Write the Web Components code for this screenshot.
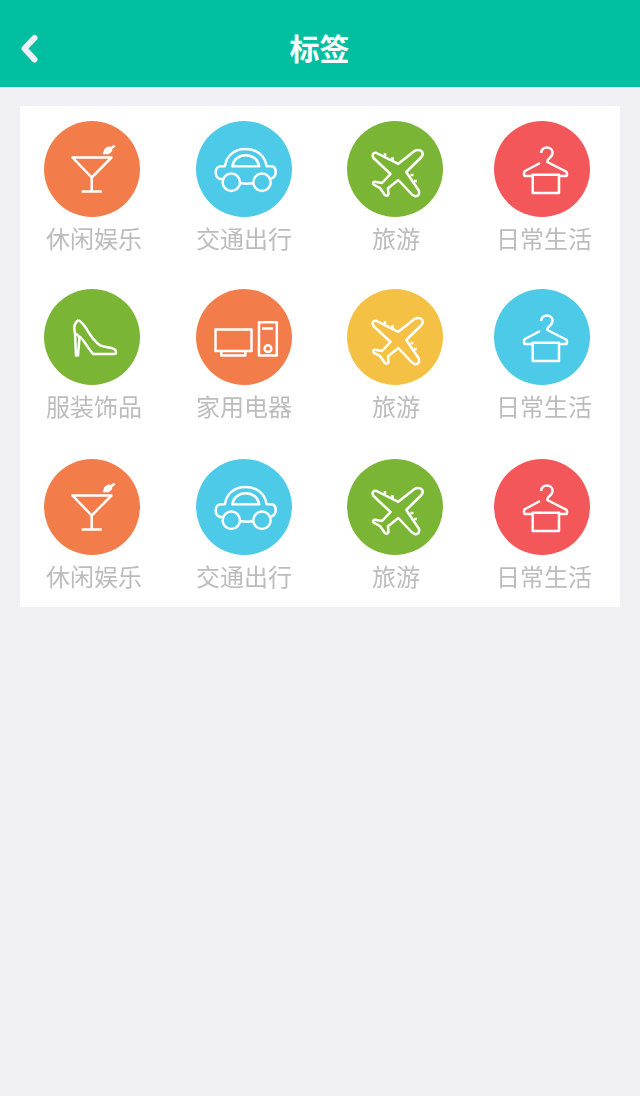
<!DOCTYPE html>
<html lang="zh">
<head>
<meta charset="utf-8">
<title>标签</title>
<style>
    html, body {
        margin: 0;
        height: 100%;
        background: #efeff4;
    }

    tag-item:nth-child(4n+1), tag-item:nth-child(4n) {
        --label-inset: 3px;
    }

    tag-item:nth-child(4n+3) {
        --label-inset: 1px;
    }
</style>
</head>
<body>
<tag-page>
    <app-header slot="header" title="标签"></app-header>
    <tag-grid>
        <tag-item color="#f37d4a" icon="cocktail">休闲娱乐</tag-item>
        <tag-item color="#4dcae8" icon="car">交通出行</tag-item>
        <tag-item color="#7ab536" icon="plane">旅游</tag-item>
        <tag-item color="#f3575a" icon="hanger">日常生活</tag-item>
        <tag-item color="#7ab536" icon="shoe">服装饰品</tag-item>
        <tag-item color="#f37d4a" icon="computer">家用电器</tag-item>
        <tag-item color="#f5c145" icon="plane">旅游</tag-item>
        <tag-item color="#4dcae8" icon="hanger">日常生活</tag-item>
        <tag-item color="#f37d4a" icon="cocktail">休闲娱乐</tag-item>
        <tag-item color="#4dcae8" icon="car">交通出行</tag-item>
        <tag-item color="#7ab536" icon="plane">旅游</tag-item>
        <tag-item color="#f3575a" icon="hanger">日常生活</tag-item>
    </tag-grid>
</tag-page>
<script>
const FONT = '"Noto Sans CJK SC", "Noto Sans", sans-serif';

const ICONS = {
    cocktail: `
        <path d="M28.5 36.5H67.5L47.7 56.5ZM47.7 56.5V70.5M37.7 70.5H57.7"/>
        <path d="M59.3 32.7L70.7 24.7" stroke-width="1.8"/>
        <ellipse cx="64" cy="29.5" rx="4.4" ry="3.4" transform="rotate(-35 64 29.5)" fill="#fff" stroke="none"/>`,
    car: `
        <path d="M26.5 58H24C21 57 19.7 54.5 19.7 51.5C19.7 47.5 22 45.2 25 45.2H29C30.5 34.5 38.5 28 49.5 28C60.5 28 69 34.5 70.5 45.2H75C78 45.2 79.7 47.5 79.7 51C79.7 54.5 78 56.7 75 57.7M57 62.3C53 62.8 48.5 62.8 44.5 62.3"/>
        <path d="M36.3 45.3C37.3 38.7 42.7 34.2 49.7 34.2C56.7 34.2 62.2 38.7 63.2 45.3Z"/>
        <circle cx="35.3" cy="61.3" r="8.7"/>
        <circle cx="66" cy="61.3" r="8.7"/>`,
    plane: `
        <path d="M26.5 37C24.5 34 26 31 29.5 32L51.3 42.8L67.5 30C71 28 76 29 75.7 33.5C75.5 35 74.5 36 73.5 37L59.2 51L71.8 69.5C73 73 71 76 67.5 75L65 73.5L51.3 59L41 67.3L41.5 73C40.7 75.5 38.5 75 37.5 73.5L33 67L27 63.8C25.3 62 26 60.7 28 60.8L35 62L43.5 53Z"/>
        <path d="M38 35V32M45.5 39V36M63.5 54H66.5M67 60H70" stroke-width="2.8"/>`,
    hanger: `
        <path d="M47 32C47.5 28.5 50 26.5 53 26.5C56 26.5 58.5 28.5 58.5 31.5C58.5 34.5 57 36 55 37.5C53.5 38.5 53.3 39.5 53.3 41L72 50.5C73.5 52 73.5 55 71.5 55H65"/>
        <path d="M46 42L31 50C29.5 51.5 29.5 55 31.5 55H38.7"/>
        <path d="M38.7 53.8H65V72H38.7Z"/>`,
    shoe: `
        <path d="M34.3 31C32 33 30.3 35 30.3 38C30.3 40.5 30.5 42.5 31 44.5L32 66.5H34L35.3 50.5C36 48 33.5 45 31 44.5" stroke-width="2.2"/>
        <path d="M34.3 31C38.5 33.5 40.5 37 42.7 40.3C46.5 46.5 50.5 52.5 56 56.3C60 58 64 58 67.7 59C70.5 59.8 72 61 72 63C72 64.3 71.5 65 70.5 65H49.3C44 60 40.5 51 35.3 47.5" stroke-width="2.2"/>`,
    computer: `
        <path d="M19.5 40.5H55.5V62H19.5Z" stroke-width="3"/>
        <path d="M25.3 62.5V66.5H49.3V62.5"/>
        <path d="M63 33.2H80.8V66.5H63Z"/>
        <path d="M66 39.5H77" stroke-width="2.6"/>
        <circle cx="72" cy="59.7" r="3.4"/>`
};

const headerTemplate = document.createElement('template');
headerTemplate.innerHTML = `
    <style>
        :host {
            display: grid;
            grid-template-columns: 1fr auto 1fr;
            align-items: center;
            height: 87px;
            padding: 11px 20px 0;
            box-sizing: border-box;
            background: #00bfa0;
            font-family: ${FONT};
        }

        .back {
            display: block;
            width: 18px;
            height: 30px;
        }

        h1 {
            margin: 0 1px 4px 0;
            font-size: 30px;
            line-height: 40px;
            font-weight: 700;
            color: #fff;
        }
    </style>
    <svg class="back" viewBox="0 0 18 30"><path d="M14.5 4L4.5 14.5L14.5 25.5" fill="none" stroke="#eff0f5" stroke-width="6" stroke-linecap="round" stroke-linejoin="round"/></svg>
    <h1></h1>
`;

class AppHeader extends HTMLElement {
    constructor() {
        super();
        this.attachShadow({ mode: 'open' });
    }

    connectedCallback() {
        this.shadowRoot.append(headerTemplate.content.cloneNode(true));
        this.shadowRoot.querySelector('h1').textContent = this.getAttribute('title');
    }
}

const pageTemplate = document.createElement('template');
pageTemplate.innerHTML = `
    <style>
        :host {
            display: block;
            min-height: 100vh;
            background: #efeff4;
        }

        main {
            padding: 19px 20px 0;
        }
    </style>
    <slot name="header"></slot>
    <main><slot></slot></main>
`;

class TagPage extends HTMLElement {
    constructor() {
        super();
        this.attachShadow({ mode: 'open' });
    }

    connectedCallback() {
        this.shadowRoot.append(pageTemplate.content.cloneNode(true));
    }
}

const gridTemplate = document.createElement('template');
gridTemplate.innerHTML = `
    <style>
        :host {
            display: grid;
            grid-template-columns: 152px 151px 147px 126px;
            grid-template-rows: 168px 170px 148px;
            padding: 15px 0 0 24px;
            background: #fff;
        }
    </style>
    <slot></slot>
`;

class TagGrid extends HTMLElement {
    constructor() {
        super();
        this.attachShadow({ mode: 'open' });
    }

    connectedCallback() {
        this.shadowRoot.append(gridTemplate.content.cloneNode(true));
    }
}

const itemTemplate = document.createElement('template');
itemTemplate.innerHTML = `
    <style>
        :host {
            display: flex;
            flex-direction: column;
            align-items: center;
            width: 96px;
            font-family: ${FONT};
        }

        .circle {
            display: block;
            width: 96px;
            height: 96px;
            border-radius: 50%;
        }

        svg {
            display: block;
            width: 96px;
            height: 96px;
        }

        svg * {
            fill: none;
            stroke: #fff;
            stroke-width: 2.5;
            stroke-linejoin: round;
        }

        svg [fill="#fff"] {
            fill: #fff;
            stroke: none;
        }

        .label {
            padding-left: var(--label-inset, 0);
            font-size: 24px;
            line-height: 42px;
            font-weight: 400;
            color: #bcbcbc;
            white-space: nowrap;
            will-change: transform;
        }
    </style>
    <div class="circle"><svg viewBox="0 0 96 96"></svg></div>
    <div class="label"><slot></slot></div>
`;

class TagItem extends HTMLElement {
    constructor() {
        super();
        this.attachShadow({ mode: 'open' });
    }

    connectedCallback() {
        this.shadowRoot.append(itemTemplate.content.cloneNode(true));
        this.shadowRoot.querySelector('.circle').style.background = this.getAttribute('color');
        this.shadowRoot.querySelector('svg').innerHTML = ICONS[this.getAttribute('icon')];
    }
}

window.customElements.define('app-header', AppHeader);
window.customElements.define('tag-page', TagPage);
window.customElements.define('tag-grid', TagGrid);
window.customElements.define('tag-item', TagItem);
</script>
</body>
</html>
